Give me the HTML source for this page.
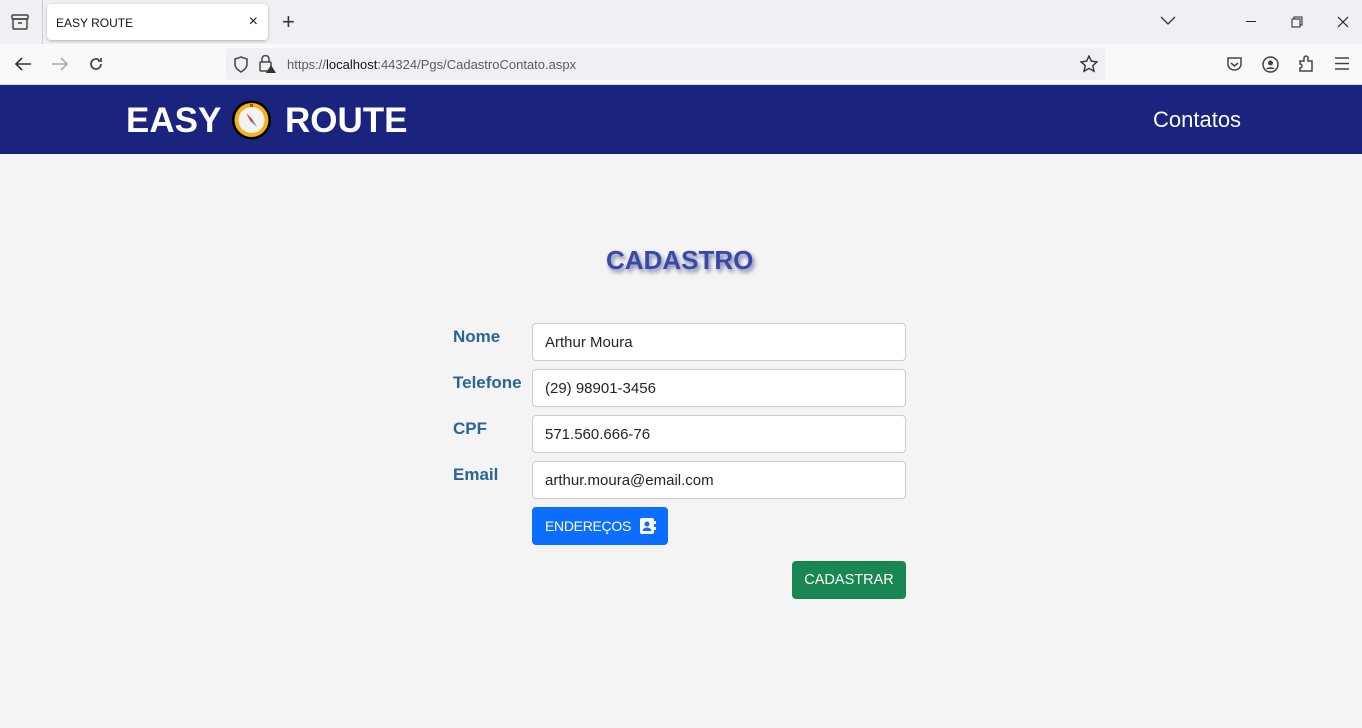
<!DOCTYPE html>
<html><head><meta charset="utf-8"><style>
*{box-sizing:border-box;margin:0;padding:0}
body{width:1362px;height:728px;overflow:hidden;background:#f4f4f4;font-family:"Liberation Sans",sans-serif;position:relative}
.abs{position:absolute}
.tabbar{top:0;left:0;width:1362px;height:44px;background:#f0f0f4}
.nav{top:44px;left:0;width:1362px;height:41px;background:#f9f9fb;border-bottom:1px solid #ddd}
.tab{top:4px;left:47px;width:221px;height:36px;background:#fff;border-radius:4px;box-shadow:0 1px 3px rgba(0,0,0,.25);font-size:12px;padding:12px 9px;color:#15141a}
.url{top:48px;left:226px;width:879px;height:32px;background:#f0f0f4;border-radius:4px;font-size:13px;color:#5b5b66;padding:9px 61px}
.hdr{top:85px;left:0;width:1362px;height:69px;background:#1a237e}
.logo{top:101px;left:126px;color:#fff;font-weight:bold;font-size:35px}
.lbl{left:453px;color:#2a6496;font-weight:bold;font-size:17px}
.inp{left:532px;width:374px;height:38px;background:#fff;border:1px solid #ccc;border-radius:4px;font-size:15px;color:#212529;padding:10px 12px 0;font-family:"Liberation Sans","DejaVu Sans",sans-serif}
svg{position:absolute}
</style></head><body>
<div class="abs tabbar"></div>
<svg style="left:11px;top:14px" width="18" height="16"><rect x="1" y="1" width="16" height="4" rx="1" fill="none" stroke="#444" stroke-width="1.5"/><rect x="2" y="5" width="14" height="10" rx="1" fill="none" stroke="#444" stroke-width="1.5"/><line x1="7" y1="9" x2="11" y2="9" stroke="#444" stroke-width="1.5"/></svg>
<div class="abs" style="left:42px;top:0;width:1px;height:44px;background:#ccc"></div>
<div class="abs tab">EASY ROUTE<span style="position:absolute;right:10px;top:9px;font-size:16px">×</span></div>
<div class="abs" style="left:282px;top:9px;font-size:22px;color:#333">+</div>
<svg style="left:1160px;top:16px" width="16" height="10"><path d="M1 1l7 7 7-7" fill="none" stroke="#333" stroke-width="1.3"/></svg>
<div class="abs" style="left:1246px;top:21px;width:10px;height:1px;background:#222"></div>
<svg style="left:1291px;top:16px" width="12" height="12"><rect x="1" y="3" width="8" height="8" fill="none" stroke="#222"/><path d="M3 3V1h8v8H9" fill="none" stroke="#222"/></svg>
<svg style="left:1337px;top:16px" width="12" height="12"><path d="M1 1l10 10M11 1L1 11" stroke="#222" stroke-width="1.2"/></svg>
<div class="abs nav"></div>
<svg style="left:14px;top:56px" width="18" height="16"><path d="M17 8H2M8 2L2 8l6 6" fill="none" stroke="#333" stroke-width="1.6"/></svg>
<svg style="left:51px;top:56px" width="18" height="16"><path d="M1 8h15M10 2l6 6-6 6" fill="none" stroke="#aaa" stroke-width="1.6"/></svg>
<svg style="left:88px;top:56px" width="16" height="16"><path d="M13 8a5 5 0 1 1-2-4M13 2v3h-3" fill="none" stroke="#333" stroke-width="1.6"/></svg>
<div class="abs url">https://<span style="color:#15141a">localhost</span>:44324/Pgs/CadastroContato.aspx</div>
<svg style="left:233px;top:56px" width="16" height="17"><path d="M8 1l6 2v5c0 4-3 6-6 8-3-2-6-4-6-8V3z" fill="none" stroke="#444" stroke-width="1.5"/></svg>
<svg style="left:259px;top:55px" width="18" height="18"><rect x="1" y="7" width="11" height="9" rx="1" fill="none" stroke="#444" stroke-width="1.5"/><path d="M3 7V4a3.5 3.5 0 0 1 7 0v3" fill="none" stroke="#444" stroke-width="1.5"/><path d="M12 10l5 8h-10z" fill="#333"/></svg>
<svg style="left:1080px;top:55px" width="18" height="18"><path d="M9 1l2.4 5.2 5.6.6-4.2 3.8 1.2 5.6L9 13.4 4 16.2l1.2-5.6L1 6.8l5.6-.6z" fill="none" stroke="#333" stroke-width="1.4"/></svg>
<svg style="left:1226px;top:56px" width="17" height="16"><path d="M2 2h13v6a6.5 6 0 0 1-13 0z" fill="none" stroke="#444" stroke-width="1.5"/><path d="M5 7l3.5 3 3.5-3" fill="none" stroke="#444" stroke-width="1.5"/></svg>
<svg style="left:1262px;top:56px" width="17" height="17"><circle cx="8.5" cy="8.5" r="7.5" fill="none" stroke="#444" stroke-width="1.5"/><circle cx="8.5" cy="7" r="2.5" fill="#444"/><path d="M4 13a5 3 0 0 1 9 0" fill="#444"/></svg>
<svg style="left:1299px;top:55px" width="16" height="18"><path d="M1 6h4V3a2 2 0 0 1 4 0v3h4v10H1v-3a2 2 0 0 0 0-4z" fill="none" stroke="#444" stroke-width="1.5"/></svg>
<svg style="left:1335px;top:57px" width="14" height="13"><path d="M0 1h14M0 6.5h14M0 12h14" stroke="#444" stroke-width="1.4"/></svg>
<div class="abs hdr"></div>
<div class="abs logo">EASY</div>
<svg style="left:231px;top:100px" width="41" height="40"><circle cx="20.5" cy="20" r="19.5" fill="#000"/><circle cx="20.5" cy="20" r="17" fill="#f5b21b"/><circle cx="20.5" cy="20" r="13" fill="#f3f3f3"/><path d="M15 13l7 7-2 2z" fill="#d32"/><path d="M26 27l-6-5 2-2z" fill="#889"/><rect x="19" y="4" width="3" height="3" fill="#d33"/></svg>
<div class="abs logo" style="left:285px">ROUTE</div>
<div class="abs" style="left:1153px;top:107px;color:#fff;font-size:22px">Contatos</div>
<div class="abs" style="left:606px;top:245px;font-size:26px;font-weight:bold;color:#3949ab;text-shadow:2px 3px 4px rgba(40,50,110,.6)">CADASTRO</div>
<div class="abs lbl" style="top:327px">Nome</div>
<div class="abs lbl" style="top:373px">Telefone</div>
<div class="abs lbl" style="top:419px">CPF</div>
<div class="abs lbl" style="top:465px">Email</div>
<div class="abs inp" style="top:323px">Arthur Moura</div>
<div class="abs inp" style="top:369px">(29) 98901-3456</div>
<div class="abs inp" style="top:415px">571.560.666-76</div>
<div class="abs inp" style="top:461px">arthur.moura@email.com</div>
<div class="abs" style="left:532px;top:507px;width:136px;height:38px;background:#0d6efd;border-radius:4px;color:#fff;font-size:14px;padding:11px 13px;font-family:'Liberation Sans','DejaVu Sans',sans-serif;letter-spacing:-0.3px">ENDEREÇOS</div>
<svg style="left:640px;top:518px" width="16" height="16"><rect x="0" y="0" width="14" height="16" rx="2" fill="#fff"/><rect x="14" y="3" width="2" height="3" fill="#fff"/><rect x="14" y="9" width="2" height="3" fill="#fff"/><circle cx="7" cy="6" r="2.5" fill="#0d6efd"/><path d="M2.5 13a4.5 3.5 0 0 1 9 0z" fill="#0d6efd"/></svg>
<div class="abs" style="left:792px;top:561px;width:114px;height:38px;background:#198754;border-radius:4px;color:#fff;font-size:14.5px;padding:11px 0;text-align:center;font-family:'Liberation Sans','DejaVu Sans',sans-serif">CADASTRAR</div>
</body></html>
